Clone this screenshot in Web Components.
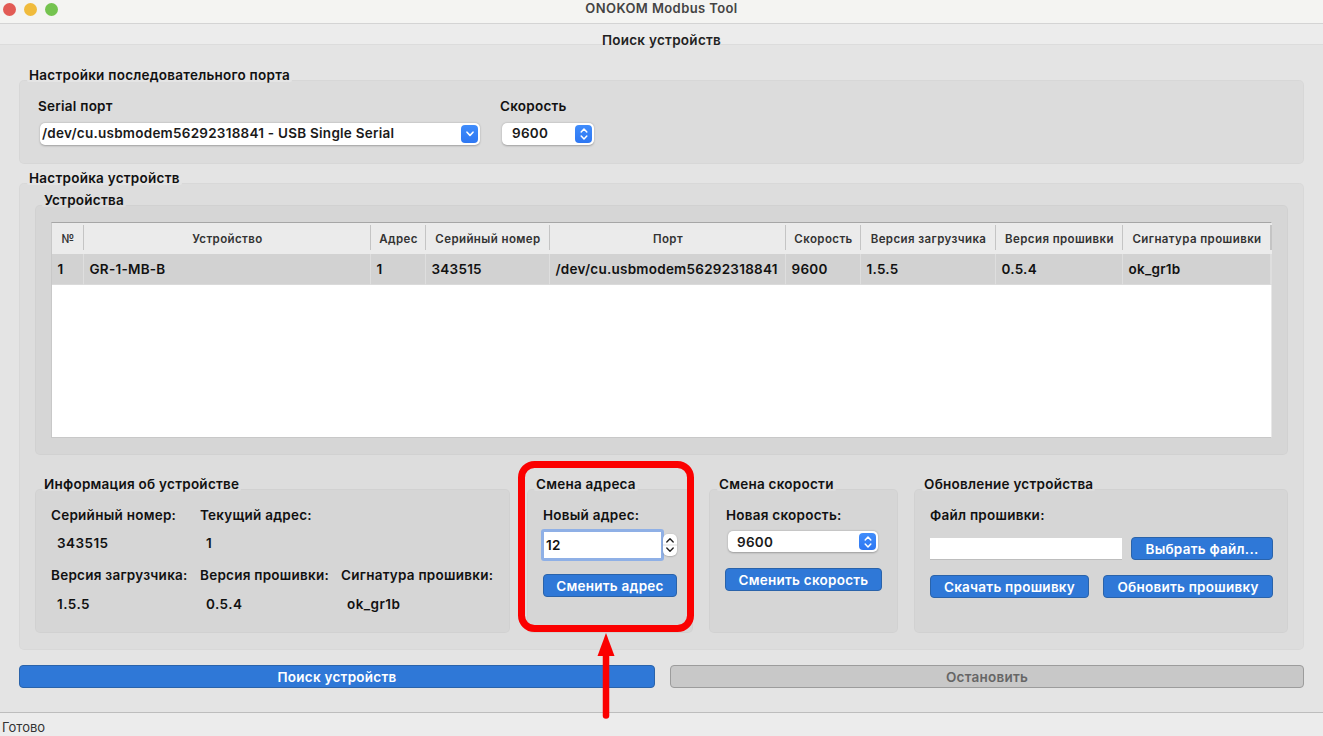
<!DOCTYPE html>
<html lang="ru"><head><meta charset="utf-8"><title>ONOKOM Modbus Tool</title>
<style>
html,body{margin:0;padding:0;height:736px;overflow:hidden}
body{font-family:Inter,"Liberation Sans",sans-serif;font-size:13.5px;letter-spacing:.25px;font-weight:600;color:#111}
</style></head><body>
<onokom-app>
  <title-bar>ONOKOM Modbus Tool</title-bar>
  <tab-bar>Поиск устройств</tab-bar>
  <main-area>
    <group-box heading="Настройки последовательного порта" style="--pad:18px 19px 19px;--bg:#dcdcdc;--parent:#e4e4e4">
      <port-settings></port-settings>
    </group-box>
    <group-box heading="Настройка устройств" style="--pad:9px 16px 17px;--bg:#dddddd;--parent:#e4e4e4;margin-top:6px">
      <group-box heading="Устройства" style="--pad:17px 16px;--bg:#d6d6d6;--parent:#dddddd;--hx:7px">
        <device-table></device-table>
      </group-box>
      <bottom-panels></bottom-panels>
    </group-box>
    <action-row></action-row>
  </main-area>
  <status-bar>Готово</status-bar>
  <call-out></call-out>
</onokom-app>
<script>
function def(name, css, html, extra){
  const t=document.createElement('template');
  t.innerHTML='<style>'+css+'</style>'+html;
  customElements.define(name, class extends HTMLElement{
    connectedCallback(){
      if(this.shadowRoot) return;
      const r=this.attachShadow({mode:'open'});
      r.appendChild(t.content.cloneNode(true));
      if(extra) extra.call(this,r);
    }
  });
}
const chevDown='<svg width="10" height="8" viewBox="0 0 10 8"><path d="M2 2.2 5 5.4 8 2.2" fill="none" stroke="#fff" stroke-width="1.6" stroke-linecap="round" stroke-linejoin="round"/></svg>';
const chevBoth='<svg width="10" height="14" viewBox="0 0 10 14"><path d="M2.2 5 5 2 7.8 5M2.2 9 5 12 7.8 9" fill="none" stroke="#fff" stroke-width="1.5" stroke-linecap="round" stroke-linejoin="round"/></svg>';

def('onokom-app',':host{display:flex;flex-direction:column;width:1323px;height:736px;position:relative;background:#e4e4e4}','<slot></slot>');

def('title-bar',`:host{display:grid;grid-template-columns:1fr auto 1fr;height:23px;background:#f4f4f2;border-bottom:1px solid #d4d4d4;color:#444;font-size:13px;letter-spacing:.4px}
.dots{display:flex;gap:8px;padding:3px 0 0 3px}
i{width:13px;height:13px;border-radius:50%;display:block}
.t{line-height:17px}`,
`<div class="dots"><i style="background:#e25b55"></i><i style="background:#f0bb3c"></i><i style="background:#74c34f"></i></div><div class="t"><slot></slot></div><div></div>`);

def('tab-bar',`:host{display:flex;justify-content:center;align-items:flex-end;height:20px;background:#ececec;border-bottom:1px solid #dcdcdc;color:#222;line-height:16px;letter-spacing:.27px}
span{margin-bottom:-4px;position:relative}`,'<span><slot></slot></span>');

def('main-area',':host{display:block;flex:1;padding:22px 19px 0;min-height:0}','<slot></slot>');

def('group-box',`:host{display:flex;flex-direction:column}
.h{display:flex;padding-left:var(--hx,8px);margin-bottom:-3px;height:16px;position:relative;z-index:1;flex:none}
.h span{background:var(--parent);padding:0 2px;border-radius:2px;line-height:16px;height:15px;white-space:nowrap}
.b{flex:1;background:var(--bg);box-shadow:inset 0 0 0 1px rgba(0,0,0,.02);border-radius:5px;padding:var(--pad);box-sizing:border-box;min-height:0;--hx:8px}`,
`<div class="h"><span></span></div><div class="b"><slot></slot></div>`,
function(r){r.querySelector('span').textContent=this.getAttribute('heading');});

def('form-label',':host{display:block;line-height:16px;height:16px;white-space:nowrap}','<slot></slot>');

def('mac-combo',`:host{display:flex;align-items:center;justify-content:space-between;box-sizing:border-box;height:var(--h,22px);background:#fff;border-radius:5px;box-shadow:0 .5px 2px rgba(0,0,0,.28);padding:0 2px 0 var(--il,2px);line-height:16px;white-space:nowrap;color:#1a1a1a}
span{margin-bottom:var(--pb,0)}
b{display:flex;align-items:center;justify-content:center;width:17px;height:calc(100% - 4px);background:linear-gradient(#3f8cfb,#2e77f2);border-radius:4px}`,
`<span><slot></slot></span><b></b>`,
function(r){r.querySelector('b').innerHTML=this.hasAttribute('both')?chevBoth:chevDown;});

def('push-button',`:host{display:flex;align-items:center;justify-content:center;box-sizing:border-box;height:23px;background:#2f78d7;color:#fff;border:1px solid #2a63aa;border-radius:4px;white-space:nowrap}
:host([off]){background:#c8c8c8;color:#666;border-color:#9c9c9c}`,'<slot></slot>');

def('port-settings',`:host{display:flex;gap:20px;--pb:2px}
.c{display:flex;flex-direction:column;gap:9px}`,
`<div class="c"><form-label>Serial порт</form-label><mac-combo style="width:440px;margin-left:2px">/dev/cu.usbmodem56292318841 - USB Single Serial</mac-combo></div>
<div class="c"><form-label>Скорость</form-label><mac-combo both style="width:92px;margin-left:2px;--il:10px">9600</mac-combo></div>`);

const cols=[['№','1'],['Устройство','GR-1-MB-B'],['Адрес','1'],['Серийный номер','343515'],['Порт','/dev/cu.usbmodem56292318841'],['Скорость','9600'],['Версия загрузчика','1.5.5'],['Версия прошивки','0.5.4'],['Сигнатура прошивки','ok_gr1b']];
def('device-table',`:host{display:block;height:216px;background:#fff;border-top:1px solid #a6a6a6;box-sizing:border-box;border-left:1px solid #c8c8c8;border-right:1px solid #e8e8e8;border-bottom:1px solid #c8c8c8}
.g{display:grid;grid-template-columns:32px 287px 55px 124px 236px 75px 135px 127px 148px 1fr;grid-template-rows:31px 31px}
.h{background:#ebebeb;color:#333;font-size:11.5px;letter-spacing:.4px;text-align:center;line-height:32px;white-space:nowrap;position:relative}
.h::after{content:"";position:absolute;right:0;top:2px;bottom:4px;width:1px;background:#c4c4c4}
.c{background:#d2d2d2;color:#111;line-height:31px;padding-left:5.5px;white-space:nowrap;border-right:1px solid #dedede;border-bottom:1px solid #dadada;box-sizing:border-box}`,
'<div class="g"></div>',
function(r){
  const g=r.querySelector('.g');
  const mk=(cl,tx)=>{const d=document.createElement('div');d.className=cl;d.textContent=tx;g.appendChild(d);};
  cols.forEach(c=>mk('h',c[0])); mk('h',' ');
  cols.forEach(c=>mk('c',c[1])); mk('c',' ');
  g.lastChild.style.padding='0';
});

def('info-grid',`:host{display:grid;grid-template-columns:149px 141px auto;grid-template-rows:16px 16px 16px 16px}
.l{line-height:16px;white-space:nowrap}.v{line-height:16px;padding-left:6px;letter-spacing:.45px}
.r2{margin-top:12px}.r3{margin-top:28px}.r4{margin-top:41px}`,
`<div class="l">Серийный номер:</div><div class="l">Текущий адрес:</div><div></div>
<div class="v r2">343515</div><div class="v r2">1</div><div class="r2"></div>
<div class="l r3">Версия загрузчика:</div><div class="l r3">Версия прошивки:</div><div class="l r3">Сигнатура прошивки:</div>
<div class="v r4">1.5.5</div><div class="v r4">0.5.4</div><div class="v r4">ok_gr1b</div>`);

def('spin-input',`:host{display:flex;align-items:center}
.f{box-sizing:border-box;width:123px;height:32px;border:3px solid #8fb0e6;border-radius:3px;background:#fff;line-height:26px;padding-left:2px;color:#111;margin-left:-2px}
.s{width:14px;height:22px;margin-left:-1px;background:#fff;border-radius:5px;box-shadow:0 .5px 1.5px rgba(0,0,0,.3)}
svg{display:block}`,
`<div class="f"><slot></slot></div><div class="s"><svg width="14" height="22" viewBox="0 0 14 22"><path d="M3.8 8 7 4.8 10.2 8M3.8 14 7 17.2 10.2 14" fill="none" stroke="#222" stroke-width="1.4" stroke-linecap="round" stroke-linejoin="round"/><path d="M0 11H14" stroke="#cfcfcf" stroke-width=".7"/></svg></div>`);

def('bottom-panels',`:host{display:flex;gap:16px;margin-top:21px}
group-box{--bg:#d6d6d6;--parent:#dddddd;height:157px;flex:none}
.col{display:flex;flex-direction:column}`,
`<group-box heading="Информация об устройстве" style="--pad:18px 15px 0 16px;width:475px;margin-right:1px;--hx:7px"><info-grid></info-grid></group-box>
<group-box heading="Смена адреса" style="--pad:18px 16px 0;width:166px;--hx:7px"><div class="col"><form-label>Новый адрес:</form-label><div style="height:6px"></div><spin-input>12</spin-input><div style="height:13px"></div><push-button>Сменить адрес</push-button></div></group-box>
<group-box heading="Смена скорости" style="--pad:18px 16px 0;width:189px"><div class="col"><form-label style="margin-left:1px">Новая скорость:</form-label><div style="height:8px"></div><mac-combo both style="width:150px;--h:21px;margin-left:3px;--il:9px">9600</mac-combo><div style="height:16px"></div><push-button>Сменить скорость</push-button></div></group-box>
<group-box heading="Обновление устройства" style="--pad:18px 15px 0 16px;width:374px"><update-panel></update-panel></group-box>`);

def('update-panel',`:host{display:grid;grid-template-columns:159px 1fr;grid-template-rows:16px 37px 38px}
form-label{grid-column:1/-1}
.i{grid-column:1;grid-row:2;background:#fff;height:22px;border-bottom:1px solid #bdbdbd;margin-top:15px;width:192px;box-sizing:border-box}
.b1{grid-column:2;grid-row:2;margin-top:14px;width:142px;justify-self:end}
.b2{grid-column:1;grid-row:3;margin-top:15px}
.b3{grid-column:2;grid-row:3;margin-top:15px;width:170px;justify-self:end}`,
`<form-label>Файл прошивки:</form-label><div class="i"></div>
<push-button class="b1">Выбрать файл...</push-button>
<push-button class="b2">Скачать прошивку</push-button>
<push-button class="b3">Обновить прошивку</push-button>`);

def('action-row',`:host{display:grid;grid-template-columns:636px 634px;column-gap:15px;margin-top:15px}`,
`<push-button>Поиск устройств</push-button><push-button off>Остановить</push-button>`);

def('status-bar',`:host{display:block;height:23px;background:#ececec;border-top:1px solid #bdbdbd;padding-left:2px;font-size:13px;letter-spacing:0;font-weight:400;line-height:28px;color:#333;overflow:hidden}`,'<slot></slot>');

def('call-out',`:host{position:absolute;left:518px;top:461px;width:176px;height:260px;pointer-events:none}
svg{display:block}`,
`<svg width="176" height="260" viewBox="0 0 176 260"><rect x="3.5" y="3.5" width="169" height="164" rx="13" fill="none" stroke="#fb0000" stroke-width="7"/><path d="M88 172 96.5 195H79.5Z" fill="#fb0000"/><path d="M88 190V254.5" stroke="#fb0000" stroke-width="6.5" stroke-linecap="round"/></svg>`);
</script>
</body></html>
